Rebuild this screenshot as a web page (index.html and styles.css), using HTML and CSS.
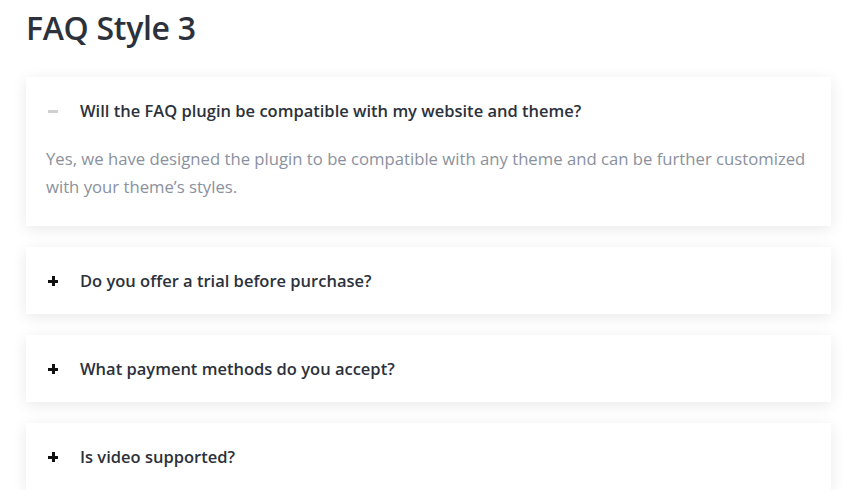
FILE: index.html
```html
<!DOCTYPE html>
<html>
<head>
<meta charset="utf-8">
<link rel="stylesheet" href="styles.css">
</head>
<body>
<div class="page">
  <h1 class="title">FAQ Style 3</h1>
  <div class="faq-list">
    <div class="faq open">
      <div class="q">
        <span class="icon minus"></span>
        <span class="q-text">Will the FAQ plugin be compatible with my website and theme?</span>
      </div>
      <div class="a">Yes, we have designed the plugin to be compatible with any theme and can be further customized with your theme’s styles.</div>
    </div>
    <div class="faq">
      <div class="q">
        <span class="icon plus"></span>
        <span class="q-text">Do you offer a trial before purchase?</span>
      </div>
    </div>
    <div class="faq">
      <div class="q">
        <span class="icon plus"></span>
        <span class="q-text">What payment methods do you accept?</span>
      </div>
    </div>
    <div class="faq">
      <div class="q">
        <span class="icon plus"></span>
        <span class="q-text">Is video supported?</span>
      </div>
    </div>
  </div>
</div>
</body>
</html>
```
FILE: styles.css
```css
* { box-sizing: border-box; }
html, body { margin: 0; padding: 0; background: #ffffff; }
body { font-family: "Open Sans", "Liberation Sans", sans-serif; }
.page { padding: 8px 16px 0 26px; }
.title {
  margin: 0;
  font-size: 32px;
  line-height: 40px;
  font-weight: 600;
  color: #2c313b;
  letter-spacing: -0.3px;
}
.faq-list {
  margin-top: 29px;
  display: flex;
  flex-direction: column;
  gap: 21px;
}
.faq {
  background: #fff;
  box-shadow: 0 3px 14px rgba(0,0,0,0.09);
}
.q {
  display: flex;
  align-items: center;
  height: 67px;
  padding-left: 22px;
}
.icon {
  position: relative;
  width: 10px;
  height: 10px;
  margin-right: 22px;
  flex: none;
}
.icon::before, .icon::after {
  content: "";
  position: absolute;
  background: #111;
}
.icon::before { left: 0; top: 4px; width: 10px; height: 3px; }
.icon::after { left: 4px; top: 0; width: 3px; height: 10px; }
.icon.minus::after { display: none; }
.icon.minus::before { background: #d0d0d0; }
.q-text {
  font-size: 16.5px;
  font-weight: 600;
  color: #2c313b;
}
.a {
  padding: 0 20px 25px 20px;
  margin-top: 1px;
  font-size: 16.7px;
  line-height: 28px;
  color: #8a919e;
}
```
